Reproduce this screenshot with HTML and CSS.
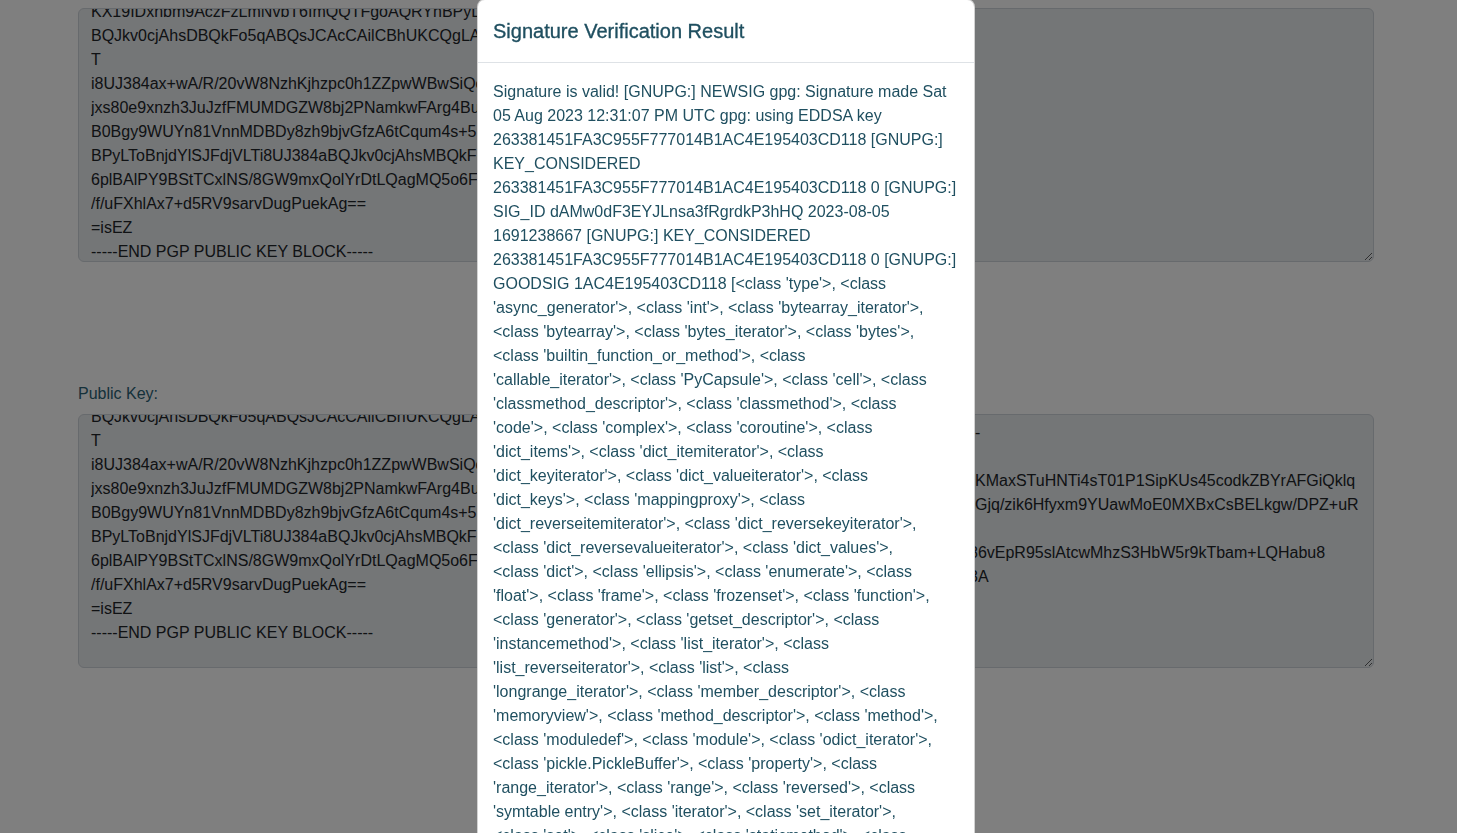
FILE: index.html
```html
<!DOCTYPE html>
<html lang="en">
<head>
<meta charset="utf-8">
<title>Signature Verification</title>
<link rel="stylesheet" href="styles.css">
</head>
<body>
<main class="page">
  <div class="keybox keybox-top">
    <div class="col-left"><div class="lines lines-top">KX19IDxnbm9AczFzLmNvbT6ImQQTFgoAQRYhBPyLToBnjdYlSJFdjVLTi8UJ384a
BQJkv0cjAhsDBQkFo5qABQsJCAcCAilCBhUKCQgLAgQWAgMBAh4BAheAAAoJEOtL
T
i8UJ384ax+wA/R/20vW8NzhKjhzpc0h1ZZpwWBwSiQoS3vWf3nKpG7cq0lHaDf8
jxs80e9xnzh3JuJzfFMUMDGZW8bj2PNamkwFArg4BuAAQC7f6uNSoHnQwZkGxOc
B0Bgy9WUYn81VnnMDBDy8zh9bjvGfzA6tCqum4s+5Rl0hYIGuK2yQv5mkw8QcQ
BPyLToBnjdYlSJFdjVLTi8UJ384aBQJkv0cjAhsMBQkFo5qAAAoJEOtLtGw7QU
6plBAlPY9BStTCxlNS/8GW9mxQolYrDtLQagMQ5o6FpYh3f0bH8zLzuK0AcRoP
/f/uFXhlAx7+d5RV9sarvDugPuekAg==
=isEZ
-----END PGP PUBLIC KEY BLOCK-----</div></div>
  </div>

  <label class="field-label">Public Key:</label>
  <div class="keybox keybox-bottom">
    <div class="col-left"><div class="lines lines-bottom">BQJkv0cjAhsDBQkFo5qABQsJCAcCAilCBhUKCQgLAgQWAgMBAh4BAheAAAoJEOtL
T
i8UJ384ax+wA/R/20vW8NzhKjhzpc0h1ZZpwWBwSiQoS3vWf3nKpG7cq0lHaDf8
jxs80e9xnzh3JuJzfFMUMDGZW8bj2PNamkwFArg4BuAAQC7f6uNSoHnQwZkGxOc
B0Bgy9WUYn81VnnMDBDy8zh9bjvGfzA6tCqum4s+5Rl0hYIGuK2yQv5mkw8QcQ
BPyLToBnjdYlSJFdjVLTi8UJ384aBQJkv0cjAhsMBQkFo5qAAAoJEOtLtGw7QU
6plBAlPY9BStTCxlNS/8GW9mxQolYrDtLQagMQ5o6FpYh3f0bH8zLzuK0AcRoP
/f/uFXhlAx7+d5RV9sarvDugPuekAg==
=isEZ
-----END PGP PUBLIC KEY BLOCK-----</div></div>
    <div class="col-right"><div class="lines lines-right">-

KMaxSTuHNTi4sT01P1SipKUs45codkZBYrAFGiQklq
Gjq/zik6Hfyxm9YUawMoE0MXBxCsBELkgw/DPZ+uR

<span class="cut">86vEpR95slAtcwMhzS3HbW5r9kTbam+LQHabu8</span>
<span class="cut">3A</span></div></div>
  </div>
</main>

<div class="backdrop"></div>

<div class="modal">
  <div class="modal-header">
    <h5 class="modal-title">Signature Verification Result</h5>
  </div>
  <div class="modal-body">Signature is valid! [GNUPG:] NEWSIG gpg: Signature made Sat<br>
05 Aug 2023 12:31:07 PM UTC gpg: using EDDSA key<br>
263381451FA3C955F777014B1AC4E195403CD118 [GNUPG:]<br>
KEY_CONSIDERED<br>
263381451FA3C955F777014B1AC4E195403CD118 0 [GNUPG:]<br>
SIG_ID dAMw0dF3EYJLnsa3fRgrdkP3hHQ 2023-08-05<br>
1691238667 [GNUPG:] KEY_CONSIDERED<br>
263381451FA3C955F777014B1AC4E195403CD118 0 [GNUPG:]<br>
GOODSIG 1AC4E195403CD118 [&lt;class 'type'&gt;, &lt;class<br>
'async_generator'&gt;, &lt;class 'int'&gt;, &lt;class 'bytearray_iterator'&gt;,<br>
&lt;class 'bytearray'&gt;, &lt;class 'bytes_iterator'&gt;, &lt;class 'bytes'&gt;,<br>
&lt;class 'builtin_function_or_method'&gt;, &lt;class<br>
'callable_iterator'&gt;, &lt;class 'PyCapsule'&gt;, &lt;class 'cell'&gt;, &lt;class<br>
'classmethod_descriptor'&gt;, &lt;class 'classmethod'&gt;, &lt;class<br>
'code'&gt;, &lt;class 'complex'&gt;, &lt;class 'coroutine'&gt;, &lt;class<br>
'dict_items'&gt;, &lt;class 'dict_itemiterator'&gt;, &lt;class<br>
'dict_keyiterator'&gt;, &lt;class 'dict_valueiterator'&gt;, &lt;class<br>
'dict_keys'&gt;, &lt;class 'mappingproxy'&gt;, &lt;class<br>
'dict_reverseitemiterator'&gt;, &lt;class 'dict_reversekeyiterator'&gt;,<br>
&lt;class 'dict_reversevalueiterator'&gt;, &lt;class 'dict_values'&gt;,<br>
&lt;class 'dict'&gt;, &lt;class 'ellipsis'&gt;, &lt;class 'enumerate'&gt;, &lt;class<br>
'float'&gt;, &lt;class 'frame'&gt;, &lt;class 'frozenset'&gt;, &lt;class 'function'&gt;,<br>
&lt;class 'generator'&gt;, &lt;class 'getset_descriptor'&gt;, &lt;class<br>
'instancemethod'&gt;, &lt;class 'list_iterator'&gt;, &lt;class<br>
'list_reverseiterator'&gt;, &lt;class 'list'&gt;, &lt;class<br>
'longrange_iterator'&gt;, &lt;class 'member_descriptor'&gt;, &lt;class<br>
'memoryview'&gt;, &lt;class 'method_descriptor'&gt;, &lt;class 'method'&gt;,<br>
&lt;class 'moduledef'&gt;, &lt;class 'module'&gt;, &lt;class 'odict_iterator'&gt;,<br>
&lt;class 'pickle.PickleBuffer'&gt;, &lt;class 'property'&gt;, &lt;class<br>
'range_iterator'&gt;, &lt;class 'range'&gt;, &lt;class 'reversed'&gt;, &lt;class<br>
'symtable entry'&gt;, &lt;class 'iterator'&gt;, &lt;class 'set_iterator'&gt;,<br>
&lt;class 'set'&gt;, &lt;class 'slice'&gt;, &lt;class 'staticmethod'&gt;, &lt;class<br>
'stderrprinter'&gt;, &lt;class 'super'&gt;, &lt;class 'traceback'&gt;,</div>
</div>
</body>
</html>
```

FILE: styles.css
```css
* { box-sizing: border-box; }

html, body {
  margin: 0;
  padding: 0;
  background: #ffffff;
  font-family: "Liberation Sans", Arial, Helvetica, sans-serif;
  font-size: 16px;
  line-height: 24px;
  color: #212529;
  overflow: hidden;
  height: 100%;
}

.page {
  width: 1296px;
  margin-left: 78px;
  padding-top: 8px;
  display: flex;
  flex-direction: column;
}

.keybox {
  height: 254px;
  border: 1px solid #ced4da;
  border-radius: 6px;
  background: #e9ecef;
  overflow: hidden;
  resize: vertical;
  display: grid;
  grid-template-columns: 881px 1fr;
  padding: 0 12px;
}

.col-left,
.col-right {
  overflow: hidden;
}

.lines {
  white-space: pre;
  color: #212529;
}

.lines-top { margin-top: -9px; }
.lines-bottom { margin-top: -10px; }
.lines-right { margin-top: 6px; margin-left: 3px; }
.cut { margin-left: -6px; }

.field-label {
  display: block;
  margin-top: 120px;
  margin-bottom: 8px;
  color: #2a6275;
}

.backdrop {
  position: fixed;
  inset: 0;
  background: rgba(0, 0, 0, 0.5);
}

.modal {
  position: fixed;
  top: -1px;
  left: 477px;
  width: 498px;
  background: #ffffff;
  border: 1px solid rgba(0, 0, 0, 0.175);
  border-radius: 8px;
  color: #1f4f60;
}

.modal-header {
  padding: 16px 15px;
  border-bottom: 1px solid #dee2e6;
}

.modal-title {
  margin: 0;
  font-size: 20px;
  line-height: 30px;
  font-weight: 500;
  color: #1f4f60;
  -webkit-text-stroke: 0.35px #1f4f60;
}

.modal-body {
  padding: 17px 15px 16px;
  white-space: nowrap;
}
```
